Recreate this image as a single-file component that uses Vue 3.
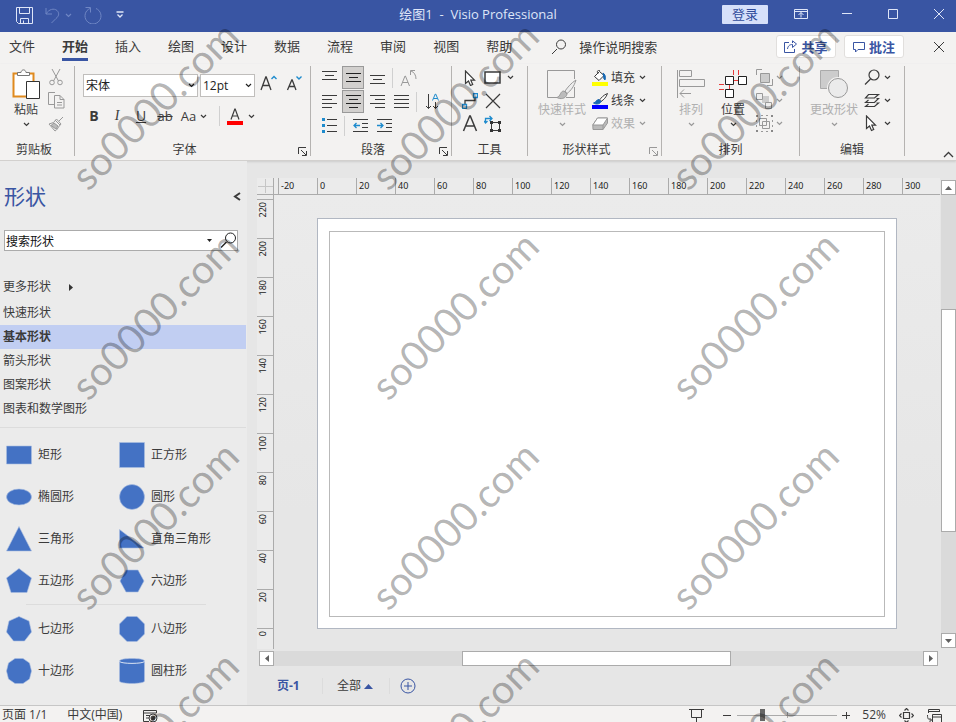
<script setup>
import { ref } from 'vue'

const tabs = ['文件', '开始', '插入', '绘图', '设计', '数据', '流程', '审阅', '视图', '帮助']
const activeTab = ref('开始')

const stencils = ['快速形状', '基本形状', '箭头形状', '图案形状', '图表和数学图形']
const activeStencil = ref('基本形状')

const shapeGroups = [
  [
    { name: '矩形', path: 'M.5 4h25v18H.5z' },
    { name: '正方形', path: 'M.5 .5h25v25H.5z' },
    { name: '椭圆形', path: 'M.5 13a12.5 8 0 1 0 25 0a12.5 8 0 1 0-25 0z' },
    { name: '圆形', path: 'M.5 13a12.5 12.5 0 1 0 25 0a12.5 12.5 0 1 0-25 0z' },
    { name: '三角形', path: 'M13 .5L25.5 25H.5z' },
    { name: '直角三角形', path: 'M.5 3.5L25 22H.5z' },
    { name: '五边形', path: 'M13 .5L25.5 10L21 24.5H5L.5 10z' },
    { name: '六边形', path: 'M7 2h12l6 11l-6 11H7L1 13z' }
  ],
  [
    { name: '七边形', path: 'M13 .5L23 5L25.5 16L18.5 25H7.5L.5 16L3 5z' },
    { name: '八边形', path: 'M8 .5h10L25.5 8v10L18 25.5H8L.5 18V8z' },
    { name: '十边形', path: 'M9 .5h8L23.5 5L25.5 13L23.5 21L17 25.5H9L2.5 21L.5 13L2.5 5z' },
    { name: '圆柱形', path: 'M.5 3c0-3.300 25-3.300 25 0v20c0 3.300-25 3.300-25 0z', lid: true }
  ]
]

const hTicks = Array.from({ length: 17 }, (_, i) => i * 20 - 20)
const vTicks = Array.from({ length: 12 }, (_, i) => 220 - i * 20)
const zoom = ref(24)
</script>

<template>
  <div class="app">
    <svg class="sprite" aria-hidden="true">
      <symbol id="caret" viewBox="0 0 7 5"><path d="M1 1l2.500 2.500L6 1" fill="none" stroke="currentColor" stroke-width="1.200" /></symbol>
      <symbol id="launch" viewBox="0 0 9 9"><path d="M.5 7V.5H8M3 3l5 5M8.500 4v4.500H4" fill="none" stroke="currentColor" /></symbol>
    </svg>

    <header class="titlebar">
      <div class="quick">
        <button aria-label="保存"><svg width="17" height="17" viewBox="0 0 17 17"><path d="M.5 .5h16v16H2.500L.5 14.500zM3.500 .5v6h10v-6M4.500 16.500v-5h8v5M7.500 16v-2.500" /></svg></button>
        <button class="dim" aria-label="撤消"><svg width="15" height="17" viewBox="0 0 15 17"><path d="M1 1v6h6M1 7C4 2 9 1 12 3.500c3 3 1.500 6-1 8L6.500 16" /></svg><svg class="caret" width="7" height="5"><use href="#caret" /></svg></button>
        <button class="dim" aria-label="恢复"><svg width="18" height="18" viewBox="0 0 18 18"><path d="M1.500 1.500h5v5M6 2.500A8 8 0 1 0 12 2.500" /></svg></button>
        <button aria-label="自定义快速访问工具栏"><svg width="8" height="8" viewBox="0 0 8 8"><path d="M.5 1h7M1.500 3.500L4 6l2.500-2.500" stroke-width="1.300" /></svg></button>
      </div>
      <h1>绘图1&nbsp; -&nbsp; Visio Professional</h1>
      <div class="window">
        <button class="login">登录</button>
        <button aria-label="功能区显示选项"><svg width="14" height="12" viewBox="0 0 14 12"><path d="M.5 1.500h13v9H.5zM.5 3.500h13M7 9.500v-5M4.500 7L7 4.500L9.500 7" /></svg></button>
        <button aria-label="最小化"><svg width="14" height="12" viewBox="0 0 14 12"><path d="M2 5.500h10" /></svg></button>
        <button aria-label="最大化"><svg width="14" height="12" viewBox="0 0 14 12"><path d="M2.500 1.500h9v9h-9z" /></svg></button>
        <button aria-label="关闭"><svg width="14" height="12" viewBox="0 0 14 12"><path d="M2 1l10 10M12 1L2 11" /></svg></button>
      </div>
    </header>

    <nav class="tabs">
      <button v-for="t in tabs" :key="t" class="tab" :class="{ active: t === activeTab }" @click="activeTab = t">{{ t }}</button>
      <button class="tellme">
        <svg width="16" height="16" viewBox="0 0 16 16"><path d="M6 10L1 15" /><circle cx="10" cy="5.500" r="4.500" /></svg>
        <span>操作说明搜索</span>
      </button>
      <div class="actions">
        <button class="pill"><svg width="13" height="13" viewBox="0 0 13 13"><path d="M5 2.500H.5v10h10V9M3.500 9C4 5.500 6 4.500 8.500 4.500V7.500L12.500 4L8.500 .8v2.200" /></svg><span>共享</span></button>
        <button class="pill"><svg width="12" height="12" viewBox="0 0 12 12"><path d="M.5 1.500h11v7H5L2.500 11V8.500h-2z" /></svg><span>批注</span></button>
        <button class="close" aria-label="关闭功能区"><svg width="14" height="12" viewBox="0 0 14 12"><path d="M2 1l10 10M12 1L2 11" /></svg></button>
      </div>
    </nav>

    <section class="ribbon">
      <div class="group clipboard">
        <div class="body">
          <button class="big">
            <svg width="28" height="31" viewBox="0 0 28 31">
              <path d="M1.500 4.500h20v23h-20z" fill="#fff" stroke="#e08a1e" stroke-width="2" />
              <path d="M5.500 6.500v-3h3.500c.5-3.500 4.500-3.500 5 0H17.500v3z" fill="#fff" stroke="#777" />
              <path d="M14.500 12.500h13v17h-13z" fill="#fff" stroke="#333" />
            </svg>
            <span>粘贴</span>
            <svg class="caret" width="7" height="5"><use href="#caret" /></svg>
          </button>
          <div class="rows narrow off">
            <button aria-label="剪切"><svg width="16" height="17" viewBox="0 0 16 17"><path d="M4 0l6.500 12M12 0L5.500 12" /><circle cx="4" cy="13.500" r="2.300" /><circle cx="12" cy="13.500" r="2.300" /></svg></button>
            <button aria-label="复制"><svg width="17" height="17" viewBox="0 0 17 17"><path d="M6 12.500H.5V.5H7M6.500 3.500h5.500l4 4v8.500H6.500zM12 3.500v4h4M9 10.500h5M9 13h5" /></svg></button>
            <button aria-label="格式刷"><svg width="16" height="16" viewBox="0 0 16 16"><path d="M15 1l-4 4M7 4l5 5M8.500 3L5.500 6.500L1 8l6 7c2-1 3-3 3.500-4L13 8z" /><path d="M3 9.500l5 3.500l2-3l-4-3z" fill="#bbb" /></svg></button>
          </div>
        </div>
        <div class="label"><span>剪贴板</span></div>
      </div>

      <div class="group font">
        <div class="body">
          <div class="line">
            <label class="combo wide"><select aria-label="字体"><option>宋体</option></select><svg class="caret" width="7" height="5"><use href="#caret" /></svg></label>
            <label class="combo"><select aria-label="字号"><option>12pt</option></select><svg class="caret" width="7" height="5"><use href="#caret" /></svg></label>
            <button class="grow" aria-label="增大字号"><svg width="17" height="18" viewBox="0 0 17 18"><path d="M1 16L5.800 3h.4L11 16M2.800 11.500h6.400" stroke-width="1.300" /><path class="blue" d="M11.500 5L14 2.500L16.500 5" stroke-width="1.400" /></svg></button>
            <button class="shrink" aria-label="减小字号"><svg width="17" height="18" viewBox="0 0 17 18"><path d="M1.500 16L5.800 6h.4L10 16M3.200 12.500h5.500" stroke-width="1.300" /><path class="blue" d="M10.500 2.500L13 5l2.500-2.500" stroke-width="1.400" /></svg></button>
          </div>
          <div class="line letters">
            <button class="b">B</button>
            <button class="i">I</button>
            <button class="u">U</button>
            <button class="s">ab</button>
            <button class="aa">Aa<svg class="caret" width="7" height="5"><use href="#caret" /></svg></button>
            <i class="sep"></i>
            <button class="color" aria-label="字体颜色"><svg width="16" height="18" viewBox="0 0 16 18"><path d="M4 12.500L7.800 2h.4L12 12.500M5.500 9h5" stroke-width="1.200" /><path d="M0 14h16v4H0z" fill="#f00" stroke="none" /></svg><svg class="caret" width="7" height="5"><use href="#caret" /></svg></button>
          </div>
        </div>
        <div class="label"><span>字体</span><button aria-label="字体设置"><svg width="9" height="9"><use href="#launch" /></svg></button></div>
      </div>

      <div class="group para">
        <div class="body">
          <div class="line">
            <button aria-label="顶端对齐"><svg width="15" height="15" viewBox="0 0 15 15"><path d="M0 1.500h15M3 5.500h9M0 9.500h15" /></svg></button>
            <button class="on" aria-label="中部对齐"><svg width="15" height="15" viewBox="0 0 15 15"><path d="M0 3.500h15M3 7.500h9M0 11.500h15" /></svg></button>
            <button aria-label="底端对齐"><svg width="15" height="15" viewBox="0 0 15 15"><path d="M0 5.500h15M3 9.500h9M0 13.500h15" /></svg></button>
            <i class="sep"></i>
            <button class="off" aria-label="旋转文本"><svg width="17" height="18" viewBox="0 0 17 18"><path d="M1 17L5 7h.4L9.500 17M2.500 13.500h5.500" /><path d="M16 10c0-4-2-7-5-8M10.500 6V1.500H15" /></svg></button>
          </div>
          <div class="line">
            <button aria-label="左对齐"><svg width="15" height="15" viewBox="0 0 15 15"><path d="M0 1.500h15M0 5.500h10M0 9.500h15M0 13.500h10" /></svg></button>
            <button class="on" aria-label="居中"><svg width="15" height="15" viewBox="0 0 15 15"><path d="M0 1.500h15M3 5.500h9M0 9.500h15M3 13.500h9" /></svg></button>
            <button aria-label="右对齐"><svg width="15" height="15" viewBox="0 0 15 15"><path d="M0 1.500h15M5 5.500h10M0 9.500h15M5 13.500h10" /></svg></button>
            <button aria-label="两端对齐"><svg width="15" height="15" viewBox="0 0 15 15"><path d="M0 1.500h15M0 5.500h15M0 9.500h15M0 13.500h15" /></svg></button>
            <i class="sep"></i>
            <button aria-label="文字方向"><svg width="15" height="17" viewBox="0 0 15 17"><path d="M3.500 1v14.500M1 13l2.500 2.500L6 13M10.500 9v6.500M8 13l2.500 2.500L13 13" /><path class="blue" d="M7.500 7.500L10.300 1h.4l2.800 6.500M8.500 5.500h4" /></svg></button>
          </div>
          <div class="line">
            <button aria-label="项目符号"><svg width="15" height="15" viewBox="0 0 15 15"><path d="M5 1.500h10M5 7.500h10M5 13.500h10" /><path d="M0 0h3v3H0zM0 6h3v3H0zM0 12h3v3H0z" fill="#1e8bcd" stroke="none" /></svg></button>
            <i class="sep tight"></i>
            <button aria-label="减少缩进"><svg width="15" height="15" viewBox="0 0 15 15"><path d="M0 1.500h15M9 5.500h6M9 9.500h6M0 13.500h15" /><path class="blue" d="M1 7.500h6M3.500 5L1 7.500L3.500 10" stroke-width="1.300" /></svg></button>
            <button aria-label="增加缩进"><svg width="15" height="15" viewBox="0 0 15 15"><path d="M0 1.500h15M9 5.500h6M9 9.500h6M0 13.500h15" /><path class="blue" d="M0 7.500h6M3.500 5L6 7.500L3.500 10" stroke-width="1.300" /></svg></button>
          </div>
        </div>
        <div class="label"><span>段落</span><button aria-label="段落设置"><svg width="9" height="9"><use href="#launch" /></svg></button></div>
      </div>

      <div class="group tools">
        <div class="body">
          <div class="rows">
            <div class="line">
              <button aria-label="指针工具"><svg width="16" height="16" viewBox="0 0 16 16"><path d="M3.500 1v12.500L6.500 11l2 4.500l2.200-1L8.800 10.200H12.500z" fill="#fff" stroke-width="1.200" /></svg></button>
              <button aria-label="矩形"><svg width="17" height="13" viewBox="0 0 17 13"><path d="M1 1h15v11H1z" fill="#fff" stroke-width="1.500" /></svg></button>
              <button class="drop" aria-label="更多形状工具"><svg class="caret" width="7" height="5"><use href="#caret" /></svg></button>
            </div>
            <div class="line">
              <button aria-label="连接线"><svg width="16" height="16" viewBox="0 0 16 16"><path d="M3 11V7.500h10V5" stroke-width="1.300" /><path class="blue" d="M11.500 .5h4v4h-4zM.5 11.500h4v4h-4z" stroke-width="1.300" /></svg></button>
              <button aria-label="删除连接点"><svg width="16" height="16" viewBox="0 0 16 16"><path d="M1 1l14 14M15 1L1 15" stroke-width="1.200" /></svg></button>
            </div>
            <div class="line">
              <button aria-label="文本"><svg width="16" height="17" viewBox="0 0 16 17"><path d="M1.500 16L7.700 1h.6L14.500 16M4 11h8" stroke-width="1.500" /></svg></button>
              <button aria-label="文本块"><svg width="17" height="17" viewBox="0 0 17 17"><path class="blue" d="M1.500 7V3.500h6M5.500 1l2.500 2.500L5.500 6M0 6l1.500 2L3.500 6" stroke-width="1.300" /><path d="M7.500 7.500h8v8h-8z" /><path d="M6 6h3v3H6zM14 6h3v3h-3zM6 14h3v3H6zM14 14h3v3h-3z" fill="#333" stroke="none" /></svg></button>
            </div>
          </div>
        </div>
        <div class="label"><span>工具</span></div>
      </div>

      <div class="group styles">
        <div class="body">
          <button class="big off">
            <svg width="32" height="31" viewBox="0 0 32 31">
              <path d="M11 28.500H1.500v-27h27V10M28.500 18v10.500H20" />
              <path d="M30 11c-5 3-8 7-11 11l2 2.500c4-3 7-7 9-13.500z" fill="#ededed" />
              <path d="M18 22c-4 0-3 5-7 6.500c3 2 9 1.500 10-3.500z" fill="#bbb" />
            </svg>
            <span>快速样式</span>
            <svg class="caret" width="7" height="5"><use href="#caret" /></svg>
          </button>
          <div class="rows textual">
            <button>
              <svg width="16" height="16" viewBox="0 0 16 16"><path d="M7 2L2.500 6.500L7 10.500L12 5.500L7.500 1.500V.5C5 0 5 2 6 4" fill="#fff" /><path d="M11 3c2 1 3 4 2 7c-2-1-1-4-2-7z" fill="#1668b4" stroke="#1668b4" /><path d="M0 12h16v4H0z" fill="#ff0" stroke="none" /></svg>
              <span>填充</span><svg class="caret" width="7" height="5"><use href="#caret" /></svg>
            </button>
            <button>
              <svg width="16" height="16" viewBox="0 0 16 16"><path d="M15.500 .5c-4 1.500-6 4-8 6.500L9 8.500c3-2 5-4 6.500-8z" fill="#fff" /><path d="M7 6.500C4 6.500 4.500 9.500 1.500 10c2 1.500 6.500 1.500 7.500-1.500z" fill="#1668b4" stroke="#1668b4" /><path d="M0 12h16v4H0z" fill="#00f" stroke="none" /></svg>
              <span>线条</span><svg class="caret" width="7" height="5"><use href="#caret" /></svg>
            </button>
            <button class="off">
              <svg width="16" height="16" viewBox="0 0 16 16"><path d="M5.500 2h10v5L11 13.500H1L.8 9z" fill="#bbb" /><path d="M5.500 2h10L11 9H.8z" fill="#fff" /><path d="M11 9v4.500" /></svg>
              <span>效果</span><svg class="caret" width="7" height="5"><use href="#caret" /></svg>
            </button>
          </div>
        </div>
        <div class="label"><span>形状样式</span><button class="off" aria-label="形状样式设置"><svg width="9" height="9"><use href="#launch" /></svg></button></div>
      </div>

      <div class="group arrange">
        <div class="body">
          <button class="big off">
            <svg width="28" height="31" viewBox="0 0 28 31"><path d="M.5 1v28M2.500 1.500h12v6h-12zM2.500 10.500h25v7h-25zM3 24.500h11M7 20.500l-4 4l4 4" /></svg>
            <span>排列</span>
            <svg class="caret" width="7" height="5"><use href="#caret" /></svg>
          </button>
          <button class="big">
            <svg width="28" height="31" viewBox="0 0 28 31"><path class="red" d="M14.500 1v5M19.500 1v5M15 11.500h5M0 15.500h5M0 20.500h5M10.500 15v5" /><path d="M6.500 7.500h8v8h-8zM19.500 7.500h8v8h-8zM6.500 20.500h8v8h-8z" fill="#fff" stroke="#222" /></svg>
            <span>位置</span>
            <svg class="caret" width="7" height="5"><use href="#caret" /></svg>
          </button>
          <div class="rows pair off">
            <button aria-label="置于顶层"><svg width="17" height="17" viewBox="0 0 17 17"><path d="M4.500 4.500h9v9h-9z" fill="#ccc" /><path d="M6 .5H.5V6M16.500 10v6.500H11" /></svg><svg class="caret" width="7" height="5"><use href="#caret" /></svg></button>
            <button aria-label="置于底层"><svg width="17" height="17" viewBox="0 0 17 17"><path d="M6 4h7v7H6z" fill="#ccc" stroke="none" /><path d="M.5 1.500h6v6h-6zM9.500 10.500h6v6h-6z" fill="#eee" /></svg><svg class="caret" width="7" height="5"><use href="#caret" /></svg></button>
            <button aria-label="组合"><svg width="17" height="17" viewBox="0 0 17 17"><path d="M3.500 3.500h7v7h-7zM6.500 6.500h7v7h-7z" /><path d="M0 0h2v2H0zM15 0h2v2h-2zM0 15h2v2H0zM15 15h2v2h-2z" fill="#888" stroke="none" /><path d="M5 .5h2M10 .5h2M5 16.500h2M10 16.500h2M.5 5v2M.5 10v2M16.500 5v2M16.500 10v2" /></svg><svg class="caret" width="7" height="5"><use href="#caret" /></svg></button>
          </div>
        </div>
        <div class="label"><span>排列</span></div>
      </div>

      <div class="group edit">
        <div class="body">
          <button class="big off">
            <svg width="30" height="31" viewBox="0 0 30 31"><path d="M1.500 1.500h18v18h-18z" fill="#ccc" stroke="#aaa" /><circle cx="19" cy="19" r="11" fill="#f3f2f1" stroke="none" /><circle cx="19" cy="19" r="9.500" fill="#ebebeb" /></svg>
            <span>更改形状</span>
            <svg class="caret" width="7" height="5"><use href="#caret" /></svg>
          </button>
          <div class="rows pair">
            <button aria-label="查找"><svg width="17" height="17" viewBox="0 0 17 17"><path d="M6.500 10L1 15.500" stroke-width="1.300" /><circle cx="10" cy="6" r="5" stroke-width="1.200" /></svg><svg class="caret" width="7" height="5"><use href="#caret" /></svg></button>
            <button aria-label="图层"><svg width="17" height="15" viewBox="0 0 17 15"><path d="M4.500 1.500h10L10.500 5H1.500zM12.500 5.500h2L10.500 9.500H1.500l3-2.500M12.500 10h2L10.500 13.500H1.500l3-2.500" stroke-width="1.200" /></svg><svg class="caret" width="7" height="5"><use href="#caret" /></svg></button>
            <button aria-label="选择"><svg width="17" height="17" viewBox="0 0 17 17"><path d="M2.500 1v12.500L5.500 11l2 4.500l2.200-1L7.800 10.200H11.500z" fill="#fff" stroke-width="1.200" /></svg><svg class="caret" width="7" height="5"><use href="#caret" /></svg></button>
          </div>
        </div>
        <div class="label"><span>编辑</span></div>
      </div>
      <button class="collapse" aria-label="折叠功能区"><svg width="11" height="7" viewBox="0 0 11 7"><path d="M1 6l4.500-4.500L10 6" stroke-width="1.300" /></svg></button>
    </section>

    <main class="workspace">
      <aside class="shapes">
        <div class="heading">
          <h2>形状</h2>
          <button aria-label="最小化形状窗口"><svg width="8" height="9" viewBox="0 0 8 9"><path d="M7 1L2 4.500L7 8" stroke-width="2" /></svg></button>
        </div>
        <div class="search">
          <input type="text" value="搜索形状" aria-label="搜索形状" />
          <svg width="5" height="3" viewBox="0 0 5 3"><path d="M0 0h5L2.500 3z" fill="#222" stroke="none" /></svg>
          <button aria-label="搜索"><svg width="17" height="17" viewBox="0 0 17 17"><path d="M6.500 10L1 15.500" stroke-width="1.500" /><circle cx="10.500" cy="6" r="5" /></svg></button>
        </div>
        <button class="more">更多形状<svg width="4" height="7" viewBox="0 0 4 7"><path d="M0 0v7l4-3.500z" fill="#333" stroke="none" /></svg></button>
        <button v-for="s in stencils" :key="s" class="stencil" :class="{ active: s === activeStencil }" @click="activeStencil = s">{{ s }}</button>
        <div class="catalog">
          <div v-for="(g, i) in shapeGroups" :key="i" class="masters">
            <button v-for="m in g" :key="m.name" class="master">
              <svg width="26" height="26" viewBox="0 0 26 26"><path :d="m.path" fill="#4472c4" stroke="#a9bde0" stroke-width=".6" /><path v-if="m.lid" d="M.5 3.500c2 2.500 23 2.500 25 0" stroke="#dbe4f3" /></svg>
              <span>{{ m.name }}</span>
            </button>
          </div>
        </div>
      </aside>

      <section class="drawing">
        <div class="board">
          <div class="corner"><svg width="16" height="16" viewBox="0 0 16 16"><path d="M1 8.500h15M8.500 1v14" stroke="#c6c6c6" /></svg></div>
          <div class="hruler"><span v-for="n in hTicks" :key="n">{{ n }}</span></div>
          <div class="vruler"><div v-for="n in vTicks" :key="n"><span>{{ n }}</span></div></div>
          <div class="stage"><div class="page"><div class="margin"></div></div></div>
        </div>
        <div class="vscroll">
          <button aria-label="向上滚动"><svg width="7" height="4" viewBox="0 0 7 4"><path d="M0 4h7L3.500 0z" /></svg></button>
          <div class="track"><div class="thumb"></div></div>
          <button aria-label="向下滚动"><svg width="7" height="4" viewBox="0 0 7 4"><path d="M0 0h7L3.500 4z" /></svg></button>
        </div>
        <div class="hscroll">
          <button aria-label="向左滚动"><svg width="4" height="7" viewBox="0 0 4 7"><path d="M4 0v7L0 3.500z" /></svg></button>
          <div class="track"><div class="thumb"></div></div>
          <button aria-label="向右滚动"><svg width="4" height="7" viewBox="0 0 4 7"><path d="M0 0v7l4-3.500z" /></svg></button>
        </div>
        <div class="pages">
          <button class="current">页-1</button>
          <button class="all">全部<svg width="9" height="5" viewBox="0 0 9 5"><path d="M0 5h9L4.500 0z" fill="#3955a3" stroke="none" /></svg></button>
          <button class="add" aria-label="插入页"><svg width="16" height="16" viewBox="0 0 16 16"><circle cx="8" cy="8" r="7" /><path d="M8 4v8M4 8h8" /></svg></button>
        </div>
      </section>
    </main>

    <footer class="status">
      <span class="count">页面 1/1</span>
      <span>中文(中国)</span>
      <button class="macro" aria-label="录制宏"><svg width="16" height="14" viewBox="0 0 16 14"><path d="M6 12.500H.5v-11h13V4M.5 4h13M3 6.500h4M3 9h3" /><circle cx="10" cy="9" r="4" /><circle cx="10" cy="9" r="2" fill="#444" /></svg></button>
      <div class="view">
        <button aria-label="演示模式"><svg width="15" height="14" viewBox="0 0 15 14"><path d="M0 1.500h15M2.500 2v7.500h10V2M7.500 9.500V14" /></svg></button>
        <div class="zoom">
          <button aria-label="缩小"><svg width="9" height="9" viewBox="0 0 9 9"><path d="M0 4.500h8" /></svg></button>
          <input v-model="zoom" type="range" min="0" max="100" aria-label="缩放" />
          <button aria-label="放大"><svg width="9" height="9" viewBox="0 0 9 9"><path d="M0 4.500h8M4.500 1v7" /></svg></button>
        </div>
        <span>52%</span>
        <button class="fit" aria-label="适应窗口大小"><svg width="15" height="15" viewBox="0 0 15 15"><path d="M4.500 4.500h6v6h-6zM5.500 2.500l2-2l2 2M5.500 12.500l2 2l2-2M2.500 5.500l-2 2l2 2M12.500 5.500l2 2l-2 2" stroke-width="1.200" /></svg></button>
        <button aria-label="切换窗口"><svg width="15" height="15" viewBox="0 0 15 15"><path d="M1.500 5V1.500h11V4M1.500 3.500h11M5.500 15V6.500h9V15M5.500 9h9M.5 7c0 4 1 5 4 5M2.500 10l2 2l-2 2" /></svg></button>
      </div>
    </footer>

    <div class="watermark" aria-hidden="true"><span v-for="n in 12" :key="n">so0000.com</span></div>
  </div>
</template>

<style>
body { margin: 0; }
</style>

<style scoped>
.app {
  position: relative;
  display: flex;
  flex-direction: column;
  height: 100vh;
  overflow: hidden;
  background: #e6e6e6;
  color: #3b3b3b;
  font: 12px/16px "Open Sans", "Noto Sans CJK SC", sans-serif;
}
.app * { box-sizing: border-box; }
.sprite { display: none; }
svg { display: block; flex: none; fill: none; stroke: currentColor; }
button {
  display: flex;
  align-items: center;
  justify-content: center;
  padding: 0;
  border: 0;
  background: none;
  color: inherit;
  font: inherit;
  white-space: nowrap;
}
h1, h2 { margin: 0; font-weight: 400; }
.blue { stroke: #1e8bcd; }
.red { stroke: #e83a3a; }
.off { color: #999; }
.off span { color: #b0b0b0; }

.titlebar {
  display: grid;
  grid-template-columns: 1fr auto 1fr;
  align-items: center;
  flex: none;
  height: 32px;
  background: #3955a3;
  color: #dfe6f8;
}
.quick { display: flex; align-items: center; gap: 12px; padding: 0 0 2px 16px; }
.quick button { gap: 5px; }
.quick button:nth-child(4) { margin-left: 2px; }
.dim { color: #6f86c4; }
.titlebar h1 { font-size: 13px; line-height: 18px; padding-bottom: 5px; }
.window { display: flex; align-items: center; justify-content: flex-end; gap: 32px; padding: 0 10px 4px 0; }
.login { width: 46px; height: 19px; margin-right: -6px; background: #d6e0fa; color: #2f4b9b; font-size: 13px; border-radius: 1px; }

.tabs { display: flex; align-items: center; gap: 27px; flex: none; height: 32px; padding: 0 10px 3px 9px; background: #f3f2f1; font-size: 13px; }
.tab { height: 28px; padding-top: 1px; border-bottom: 3px solid transparent; }
.tab.active { border-color: #3955a3; font-weight: 700; }
.tellme { gap: 12px; margin-left: 12px; }
.actions { display: flex; align-items: center; gap: 8px; margin-left: auto; }
.pill { gap: 4px; width: 60px; height: 23px; border: 1px solid #e1dfdd; border-radius: 3px; background: #fff; color: #3955a3; font-weight: 700; }
.close { margin-left: 20px; }

.ribbon {
  display: grid;
  grid-template-columns: 75px 236px 141px 76px 134px 138px 105px 1fr;
  flex: none;
  height: 97px;
  padding: 2px 0;
  background: #f3f2f1;
  border-bottom: 1px solid #d2d0ce;
  box-shadow: 0 1px 2px #ccc;
}
.group { display: grid; grid-template-rows: 1fr 16px; margin-bottom: 2px; border-right: 1px solid #b5b3b1; }
.body { display: flex; }
.label { display: flex; padding-top: 2px; text-align: center; }
.label span { flex: 1; color: #3b3b3b; }
.label button { width: 16px; height: 14px; align-items: end; }
.line { display: flex; align-items: center; }
.big { flex-direction: column; justify-content: flex-start; height: 64px; padding-top: 3px; }
.big span { line-height: 20px; margin-bottom: 2px; }
.rows { display: grid; grid-auto-rows: 23px; align-content: start; }
.rows button { justify-content: flex-start; gap: 7px; }
.sep { width: 1px; height: 20px; background: #d0d0d0; }

.clipboard .body { padding-left: 12px; gap: 8px; }
.clipboard .label { padding-right: 6px; }

.font .body { flex-direction: column; padding: 8px 0 0 8px; gap: 8px; }
.combo { display: flex; align-items: center; width: 55px; height: 23px; padding-right: 2px; border: 1px solid #c0bebc; background: #fff; color: #222; }
.combo.wide { width: 115px; margin-right: 2px; }
.combo select { flex: 1; min-width: 0; height: 21px; padding: 0 2px; border: 0; background: none; color: inherit; font: inherit; appearance: none; }
.grow { margin-left: 5px; }
.shrink { margin-left: 9px; }
.font .line:first-child button { align-self: flex-start; }
.letters { height: 22px; font-size: 14px; }
.letters button { width: 24px; height: 22px; }
.letters .b { width: 22px; font-weight: 700; }
.letters .i { font-family: "Liberation Serif", serif; font-style: italic; }
.letters .u { text-decoration: underline; }
.letters .s { font-size: 13px; text-decoration: line-through; }
.letters .aa { width: 30px; gap: 4px; font-size: 13px; margin: 0 10px 0 2px; }
.letters .color { width: 30px; gap: 5px; margin-left: 6px; }

.para .body { flex-direction: column; gap: 1px; padding-left: 7px; }
.para .line { height: 23px; gap: 2px; }
.para .line button { width: 22px; height: 23px; }
.para .line .on { border: 1px solid #999; background: #d2d0ce; color: #222; }
.para .sep { margin: 0 2px; }

.tools .body { padding-left: 6px; }
.tools .line button { width: 23px; height: 23px; justify-content: center; }
.tools .line .drop { width: 12px; }

.styles .body { padding-left: 10px; gap: 6px; }
.textual button { gap: 3px; color: #3b3b3b; }
.textual .off { color: #999; }
.textual .caret { margin-left: 1px; }

.arrange .body { padding-left: 15px; gap: 14px; }
.arrange .pair { margin-left: -5px; }
.edit .body { padding-left: 10px; gap: 6px; }
.pair button { gap: 3px; }
.collapse { align-self: end; justify-self: end; margin-right: 2px; }

.workspace { display: flex; flex: 1; min-height: 0; }
.shapes { flex: none; width: 247px; padding-top: 20px; background: #ebebeb; }
.heading { display: flex; align-items: center; justify-content: space-between; height: 30px; padding: 0 6px 0 4px; }
.heading h2 { color: #3955a3; font-size: 21px; line-height: 30px; }
.search { display: flex; align-items: center; width: 234px; height: 21px; margin: 19px 0 24px 4px; border: 1px solid #ababab; background: #fff; }
.search input { flex: 1; min-width: 0; height: 19px; padding: 0 1px; border: 0; background: none; color: #111; font: inherit; outline: 0; }
.search button { margin-left: 8px; color: #222; }
.more, .stencil { justify-content: flex-start; width: 100%; height: 24px; padding-left: 3px; }
.more { gap: 18px; margin-bottom: 2px; }
.stencil { width: 246px; }
.stencil.active { background: #c1cef2; font-weight: 700; }
.catalog { width: 246px; margin-top: 6px; padding-top: 6px; border-top: 1px solid #dcdcdc; }
.masters { display: grid; grid-template-columns: 113px 1fr; grid-auto-rows: 42px; padding-left: 6px; }
.masters + .masters { grid-template-rows: 4px; margin-top: 2px; }
.masters + .masters::before { content: ""; grid-column: 1 / -1; height: 1px; margin: 0 40px 0 20px; background: #dcdcdc; }
.master { justify-content: flex-start; gap: 6px; }

.drawing {
  display: grid;
  grid-template-columns: 1fr 16px;
  grid-template-rows: minmax(0, 1fr) 16px 38px;
  flex: 1;
  min-width: 0;
  padding: 17px 0 0 10px;
}
.board { display: grid; grid-template-columns: 17px 1fr; grid-template-rows: 17px minmax(0, 1fr); min-width: 0; margin-bottom: 2px; }
.corner, .hruler, .vruler { background: #ebebeb; }
.corner, .hruler { border-bottom: 1px solid #ababab; }
.corner, .vruler { border-right: 1px solid #ababab; }
.hruler { display: flex; min-width: 0; padding-left: 4px; overflow: hidden; color: #222; font: 9px/15px "Noto Sans", sans-serif; }
.hruler span { flex: 0 0 39px; padding-left: 2px; border-left: 1px solid #ababab; }
.vruler { padding-top: 4px; overflow: hidden; color: #222; font: 9px/10px "Noto Sans", sans-serif; }
.vruler div { height: 39px; padding: 2px 0 0 1px; border-top: 1px solid #ababab; }
.vruler span { display: block; width: 10px; writing-mode: vertical-rl; transform: rotate(180deg); }
.stage { display: grid; padding: 23px 43px 20px; background: linear-gradient(#ebebeb, #e6e6e6 70%); }
.page { display: grid; padding: 12px 11px 11px; border: 1px solid #b1b7c2; background: #fff; }
.margin { border: 1px solid #b9b9b9; }

.vscroll, .hscroll { display: flex; }
.vscroll { flex-direction: column; width: 15px; margin: 2px 0 3px 1px; }
.hscroll { grid-column: 1 / -1; margin: 0 18px 0 2px; }
.vscroll button, .hscroll button { flex: none; width: 15px; height: 15px; border: 1px solid #ababab; background: #fff; color: #606060; }
.vscroll svg, .hscroll svg { fill: currentColor; stroke: none; }
.track { display: grid; flex: 1; background: #dadada; }
.hscroll .track { height: 15px; }
.thumb { border: 1px solid #ababab; background: #fff; }
.vscroll .track { grid-template-rows: 114fr 223fr 101fr; }
.vscroll .thumb { grid-row: 2; }
.hscroll .track { grid-template-columns: 188fr 269fr 192fr; }
.hscroll .thumb { grid-column: 2; }
.pages { display: flex; align-items: center; grid-column: 1 / -1; padding-left: 20px; }
.pages button { height: 16px; justify-content: flex-start; }
.pages .current { width: 46px; color: #3955a3; font-weight: 700; border-right: 1px solid #dcdcdc; }
.pages .all { width: 67px; gap: 3px; padding-left: 14px; border-right: 1px solid #dcdcdc; }
.pages .add { margin-left: 10px; color: #3955a3; }

.status { display: flex; align-items: flex-start; flex: none; height: 17px; padding: 2px 14px 0 2px; overflow: hidden; border-top: 1px solid #c6c6c6; background: #f3f2f1; line-height: 14px; }
.count { margin-right: 20px; }
.macro { margin: 1px 0 0 21px; }
.view { display: flex; align-items: center; margin-left: auto; height: 14px; }
.zoom { display: flex; align-items: center; gap: 5px; margin: 0 11px 0 19px; }
.zoom input { width: 100px; height: 14px; margin: 0; appearance: none; background: linear-gradient(#aaa, #aaa) center / 1px 6px no-repeat, linear-gradient(#aaa, #aaa) center / 100% 1px no-repeat; }
.zoom input::-webkit-slider-thumb { width: 5px; height: 12px; appearance: none; background: #666; }
.fit { margin: 0 13px; }

.watermark {
  position: absolute;
  inset: 0;
  display: grid;
  grid-template-columns: repeat(3, 300px);
  grid-auto-rows: 210px;
  place-items: center;
  padding-left: 4px;
  overflow: hidden;
  color: rgba(0, 0, 0, .3);
  font: 40px/46px Lato, "Liberation Sans", sans-serif;
  pointer-events: none;
}
.watermark span { transform: rotate(-45deg); }
</style>
